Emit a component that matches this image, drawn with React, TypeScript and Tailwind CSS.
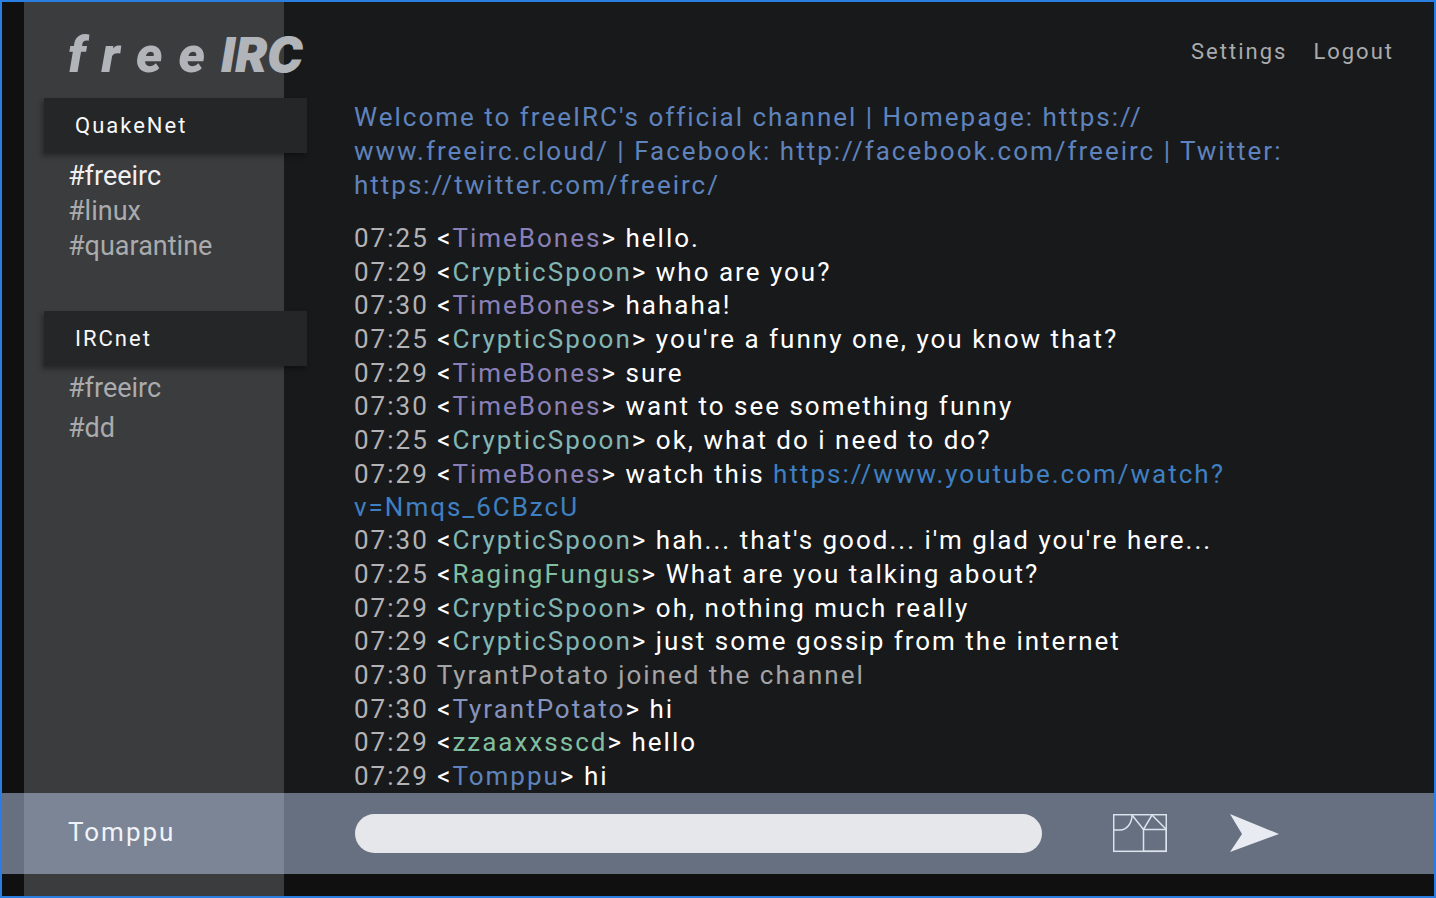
import React from "react";

type Line = {
  time: string;
  nick?: string;
  color?: string;
  text: React.ReactNode;
};

const purple = "text-[#8a80b8]";
const teal = "text-[#80b6b4]";
const green = "text-[#80bfa0]";

const lines: Line[] = [
  { time: "07:25", nick: "TimeBones", color: purple, text: "hello." },
  { time: "07:29", nick: "CrypticSpoon", color: teal, text: "who are you?" },
  { time: "07:30", nick: "TimeBones", color: purple, text: "hahaha!" },
  { time: "07:25", nick: "CrypticSpoon", color: teal, text: "you're a funny one, you know that?" },
  { time: "07:29", nick: "TimeBones", color: purple, text: "sure" },
  { time: "07:30", nick: "TimeBones", color: purple, text: "want to see something funny" },
  { time: "07:25", nick: "CrypticSpoon", color: teal, text: "ok, what do i need to do?" },
  {
    time: "07:29",
    nick: "TimeBones",
    color: purple,
    text: (
      <>
        watch this{" "}
        <a href="https://www.youtube.com/watch?v=Nmqs_6CBzcU" className="text-[#3f80c2]">
          https://www.youtube.com/watch?<wbr />v=Nmqs_6CBzcU
        </a>
      </>
    ),
  },
  { time: "07:30", nick: "CrypticSpoon", color: teal, text: "hah... that's good... i'm glad you're here..." },
  { time: "07:25", nick: "RagingFungus", color: green, text: "What are you talking about?" },
  { time: "07:29", nick: "CrypticSpoon", color: teal, text: "oh, nothing much really" },
  { time: "07:29", nick: "CrypticSpoon", color: teal, text: "just some gossip from the internet" },
  { time: "07:30", text: "TyrantPotato joined the channel" },
  { time: "07:30", nick: "TyrantPotato", color: "text-[#8594bf]", text: "hi" },
  { time: "07:29", nick: "zzaaxxsscd", color: green, text: "hello" },
  { time: "07:29", nick: "Tomppu", color: "text-[#5f83bd]", text: "hi" },
];

function Server({ name }: { name: string }) {
  return (
    <h2 className="relative -mr-[23px] ml-5 flex h-[55px] items-center bg-[#252628] pl-[31px] text-[22px] font-normal tracking-[2px] text-[#f8f8fa] shadow-[-2px_3px_5px_rgba(0,0,0,0.35)]">
      {name}
    </h2>
  );
}

function Channel({ name, active }: { name: string; active?: boolean }) {
  return (
    <li>
      <a href="#channel" className={active ? "text-[#f0f0f2]" : "text-[#aaabad]"}>
        {name}
      </a>
    </li>
  );
}

function Message({ line }: { line: Line }) {
  return (
    <li>
      <time className="text-[#b3b3b5]">{line.time}</time>{" "}
      {line.nick ? (
        <span className="text-white">
          &lt;<span className={line.color}>{line.nick}</span>&gt; {line.text}
        </span>
      ) : (
        <span className="text-[#a3a4a6]">{line.text}</span>
      )}
    </li>
  );
}

export default function App() {
  return (
    <div className="flex min-h-screen flex-col border-2 border-[#2a7de1] bg-[#101010] font-['Roboto',sans-serif]">
      <div className="grid flex-1 grid-cols-[22px_260px_1fr]">
        <div />
        <aside className="bg-[#3b3c3e]">
          <h1 className="relative -mr-[23px] ml-[44px] flex h-24 items-baseline pt-7 text-[50px] font-black italic leading-none text-[#b1b4b9]">
            <span className="flex gap-4">
              <span>f</span>
              <span>r</span>
              <span>e</span>
              <span>e</span>
            </span>
            <span className="ml-4 font-['Inter',sans-serif] text-[48px]">IRC</span>
          </h1>
          <Server name="QuakeNet" />
          <ul className="ml-[44px] mt-1.5 text-[27px] leading-[35px]">
            <Channel name="#freeirc" active />
            <Channel name="#linux" />
            <Channel name="#quarantine" />
          </ul>
          <div className="h-[47px]" />
          <Server name="IRCnet" />
          <ul className="ml-[44px] mt-0.5 text-[27px] leading-10">
            <Channel name="#freeirc" />
            <Channel name="#dd" />
          </ul>
        </aside>
        <main className="flex flex-col bg-[#18191b] pl-[70px] text-[26px] tracking-[2px]">
          <nav className="flex h-[98px] items-center justify-end gap-[26px] pr-10 text-[22px] text-[#aaabad]">
            <a href="#settings">Settings</a>
            <a href="#logout">Logout</a>
          </nav>
          <p className="mr-36 leading-[34px] text-[#5f83bd]">
            Welcome to freeIRC's official channel | Homepage: https://<wbr />www.freeirc.cloud/ | Facebook:
            http://facebook.com/freeirc | Twitter: https://twitter.com/freeirc/
          </p>
          <ul className="mr-36 mt-5 flex flex-1 flex-col justify-between leading-[33px]">
            {lines.map((line, i) => (
              <Message key={i} line={line} />
            ))}
          </ul>
        </main>
      </div>
      <form className="grid h-[81px] grid-cols-[22px_260px_1fr] bg-[#677080]" onSubmit={(e) => e.preventDefault()}>
        <div />
        <label htmlFor="message" className="flex items-center bg-[#7c8596] pb-0.5 pl-[44px] text-[26px] tracking-[2px] text-[#f0f3f8]">
          Tomppu
        </label>
        <div className="flex items-center pl-[71px] pr-[155px]">
          <input id="message" type="text" className="h-[39px] min-w-0 flex-1 rounded-full bg-[#e5e7eb] px-5 text-xl text-[#18191b] outline-none" />
          <button type="button" aria-label="Insert image" className="ml-[71px]">
            <svg className="block" width="54" height="39" viewBox="0 0 54 39" fill="none" stroke="#dbe3ee" strokeWidth="1.5">
              <rect x="0.7" y="0.7" width="52.6" height="36.6" />
              <path d="M0.7 16H7C14 16 19 9 19 1L30.5 15.5L39 1L53.3 15.5" />
              <rect x="30.5" y="15.5" width="22.8" height="21.8" />
            </svg>
          </button>
          <button type="submit" aria-label="Send" className="ml-[63px]">
            <svg className="block" width="49" height="39" viewBox="0 0 49 39" fill="#e8ecf2">
              <path d="M0 0L49 20L0 38L12 20Z" />
            </svg>
          </button>
        </div>
      </form>
      <div className="grid h-[22px] grid-cols-[22px_260px_1fr]">
        <div />
        <div className="bg-[#3b3c3e]" />
      </div>
    </div>
  );
}
